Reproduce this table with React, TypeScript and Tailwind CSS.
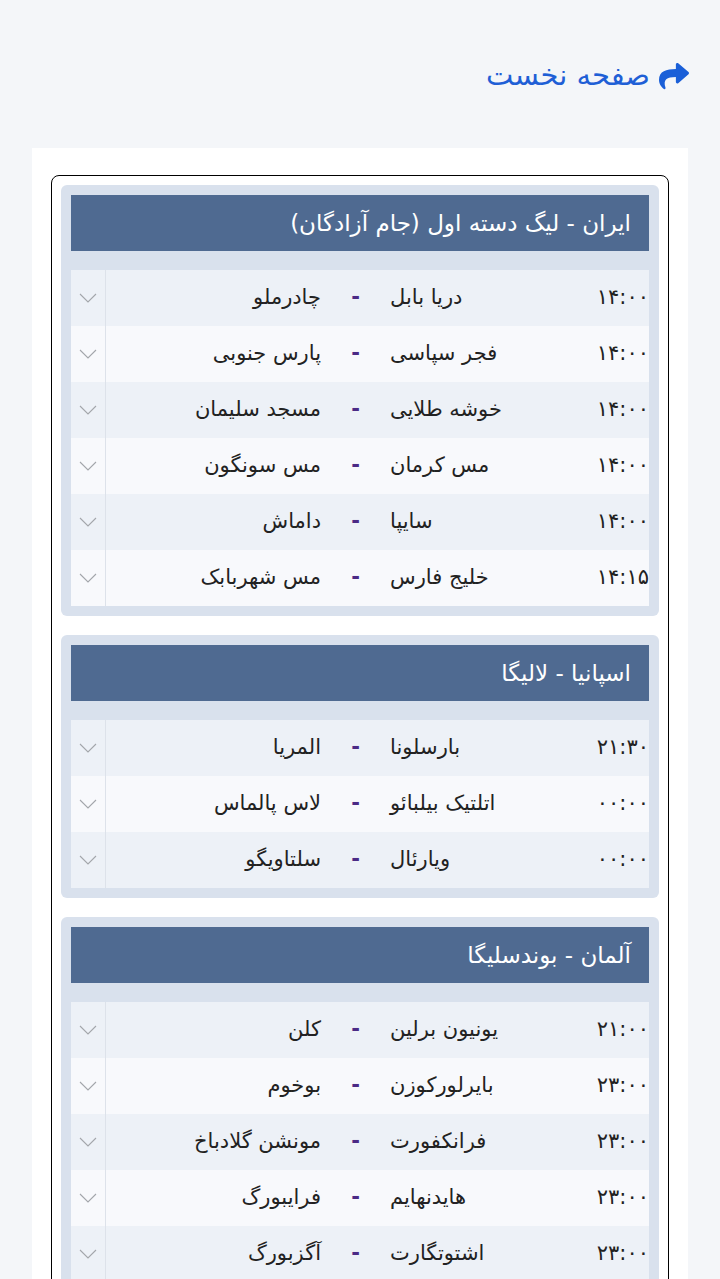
type Match = { time: string; home: string; away: string };
type League = { title: string; matches: Match[] };

const leagues: League[] = [
  {
    title: "ایران - لیگ دسته اول (جام آزادگان)",
    matches: [
      { time: "۱۴:۰۰", home: "دریا بابل", away: "چادرملو" },
      { time: "۱۴:۰۰", home: "فجر سپاسی", away: "پارس جنوبی" },
      { time: "۱۴:۰۰", home: "خوشه طلایی", away: "مسجد سلیمان" },
      { time: "۱۴:۰۰", home: "مس کرمان", away: "مس سونگون" },
      { time: "۱۴:۰۰", home: "سایپا", away: "داماش" },
      { time: "۱۴:۱۵", home: "خلیج فارس", away: "مس شهربابک" },
    ],
  },
  {
    title: "اسپانیا - لالیگا",
    matches: [
      { time: "۲۱:۳۰", home: "بارسلونا", away: "المریا" },
      { time: "۰۰:۰۰", home: "اتلتیک بیلبائو", away: "لاس پالماس" },
      { time: "۰۰:۰۰", home: "ویارئال", away: "سلتاویگو" },
    ],
  },
  {
    title: "آلمان - بوندسلیگا",
    matches: [
      { time: "۲۱:۰۰", home: "یونیون برلین", away: "کلن" },
      { time: "۲۳:۰۰", home: "بایرلورکوزن", away: "بوخوم" },
      { time: "۲۳:۰۰", home: "فرانکفورت", away: "مونشن گلادباخ" },
      { time: "۲۳:۰۰", home: "هایدنهایم", away: "فرایبورگ" },
      { time: "۲۳:۰۰", home: "اشتوتگارت", away: "آگزبورگ" },
    ],
  },
];

function ShareIcon() {
  return (
    <svg viewBox="0 0 512 512" className="h-[30px] w-[32px] fill-[#1a5fd8]">
      <path d="M503.691 189.836L327.687 37.851C312.281 24.546 288 35.347 288 56.015v80.053C127.371 137.907 0 170.1 0 322.326c0 61.441 39.581 122.309 83.333 154.132 13.653 9.931 33.111-2.533 28.077-18.631C66.066 312.814 132.917 274.316 288 272.085V360c0 20.7 24.3 31.453 39.687 18.164l176.004-152c11.071-9.562 11.086-26.753 0-36.328z" />
    </svg>
  );
}

function Chevron() {
  return (
    <svg viewBox="0 0 18 10" className="h-[10px] w-[18px]" fill="none">
      <polyline points="1,1 9,9 17,1" stroke="#a3a6ab" strokeWidth="1.1" />
    </svg>
  );
}

function MatchRow({ m, idx }: { m: Match; idx: number }) {
  return (
    <div
      className={`flex h-[56px] items-center text-[21px] text-[#222] ${
        idx % 2 === 0 ? "bg-[#edf1f7]" : "bg-[#f8f9fc]"
      }`}
    >
      <div className="w-[100px] shrink-0 text-right">{m.time}</div>
      <div className="flex-1 text-left">{m.home}</div>
      <div className="w-[69px] shrink-0 text-center font-bold text-[#4b2a85]">-</div>
      <div className="w-[215px] shrink-0 text-right">{m.away}</div>
      <div className="flex h-full w-[35px] shrink-0 items-center justify-center border-r border-[#dde2ea]">
        <Chevron />
      </div>
    </div>
  );
}

export default function App() {
  return (
    <div
      dir="rtl"
      className="min-h-screen bg-[#f4f6f9] px-[32px]"
      style={{ fontFamily: '"DejaVu Sans", "Noto Sans", sans-serif' }}
    >
      <div className="flex h-[148px] items-start pt-[54px]">
        <a href="#" className="-mr-[2px] flex items-center gap-[8px] text-[29px] text-[#1f5fd6]">
          <ShareIcon />
          <span>صفحه نخست</span>
        </a>
      </div>
      <div className="bg-white px-[19px] pt-[27px]">
        <div className="rounded-[8px] border border-black p-[9px]">
          <div className="flex flex-col gap-[19px]">
            {leagues.map((lg) => (
              <div key={lg.title} className="rounded-[6px] bg-[#d9e1ed] p-[10px]">
                <div className="flex h-[56px] items-center bg-[#4f6a91] pr-[18px] text-[23px] text-white">
                  {lg.title}
                </div>
                <div className="mt-[19px]">
                  {lg.matches.map((m, i) => (
                    <MatchRow key={i} m={m} idx={i} />
                  ))}
                </div>
              </div>
            ))}
          </div>
        </div>
      </div>
    </div>
  );
}
